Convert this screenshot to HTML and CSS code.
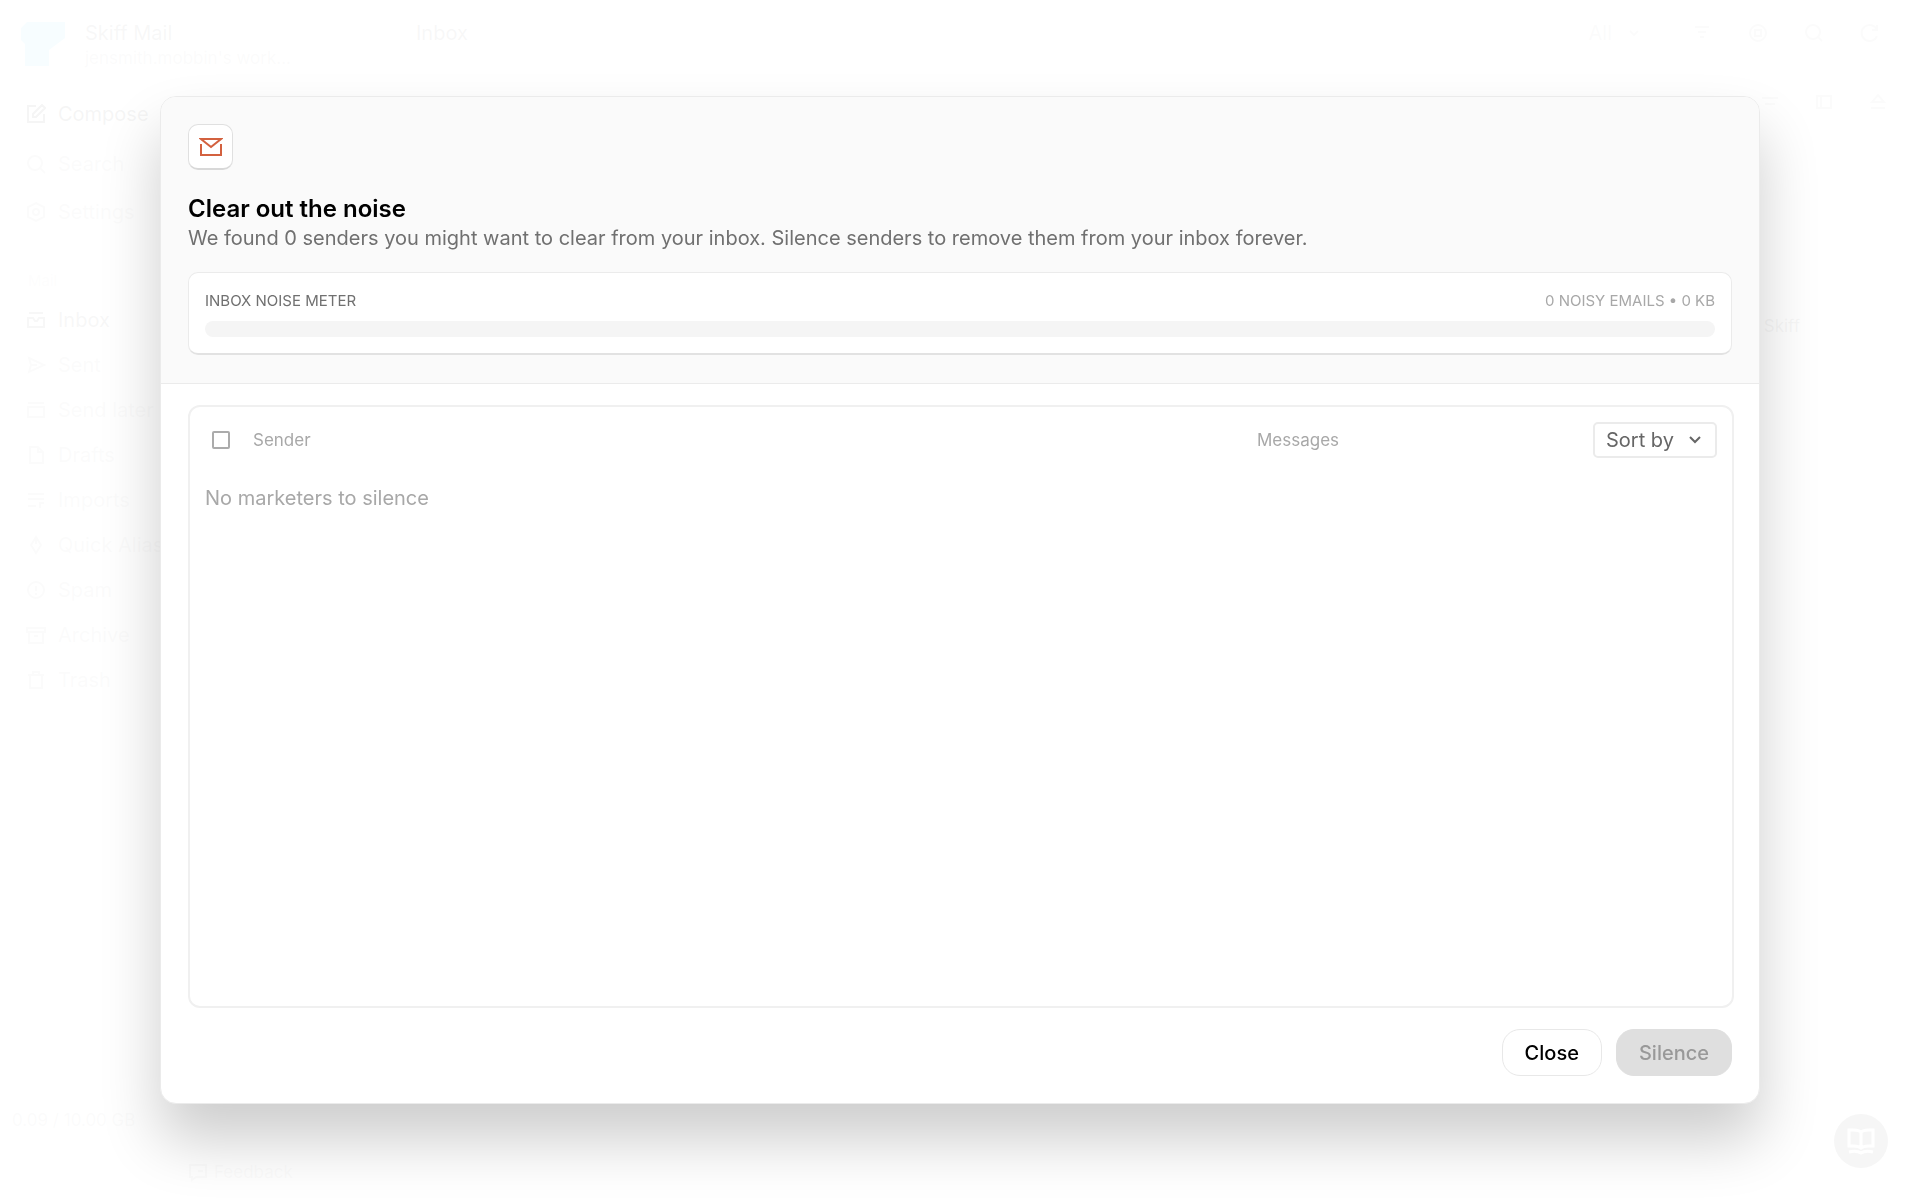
FILE: index.html
```html
<!DOCTYPE html>
<html lang="en">
<head>
    <meta charset="UTF-8">
    <meta name="viewport" content="width=device-width, initial-scale=1.0">
    <title>Skiff Mail</title>
    <link rel="stylesheet" href="styles.css">
</head>
<body>
    <!-- Mailbox -->
    <div class="app">
        <aside class="sidebar">
            <div class="account">
                <svg class="logo" viewBox="0 0 44 46"><path d="M6 2h38v16L28 30v16H4V24L0 20V8z" fill="#38bdf8"/></svg>
                <div>
                    <div class="account-name">Skiff Mail</div>
                    <div class="account-mail">jensmith.mobbin's work...</div>
                </div>
            </div>

            <nav class="actions">
                <a href="#" class="compose"><svg viewBox="0 0 20 20"><path d="M10 2H2v16h16v-8M7 13v-3l9-9 3 3-9 9z"/></svg>Compose</a>
                <a href="#"><svg viewBox="0 0 20 20"><circle cx="9" cy="9" r="7"/><path d="M14 14l5 5"/></svg>Search</a>
                <a href="#"><svg viewBox="0 0 20 20"><path d="M10 1l8 4v10l-8 4-8-4V5z"/><circle cx="10" cy="10" r="3"/></svg>Settings</a>
            </nav>

            <div class="nav-title">Mail</div>
            <nav class="folders">
                <a href="#" class="active"><svg viewBox="0 0 20 20"><path d="M3 3h14M2 8h5l2 3h2l2-3h5v9H2z"/></svg>Inbox</a>
                <a href="#"><svg viewBox="0 0 20 20"><path d="M3 3l15 7-15 7 2-7zM5 10h6"/></svg>Sent</a>
                <a href="#"><svg viewBox="0 0 20 20"><path d="M2 3h16M2 7h16v10H2z"/></svg>Send later</a>
                <a href="#"><svg viewBox="0 0 20 20"><path d="M4 2h8l5 5v11H4zM12 2v5h5"/></svg>Drafts</a>
                <a href="#"><svg viewBox="0 0 20 20"><path d="M2 4h16M2 9h16M2 16h8M14 18v-5h4"/></svg>Imports</a>
                <a href="#"><svg viewBox="0 0 20 20"><path d="M10 2l5 8-5 8-5-8zM10 2v7"/></svg>Quick Alias</a>
                <a href="#"><svg viewBox="0 0 20 20"><circle cx="10" cy="10" r="8"/><path d="M10 6v5M10 13v2"/></svg>Spam</a>
                <a href="#"><svg viewBox="0 0 20 20"><path d="M1 3h18v4H1zM3 7v11h14V7M8 11h4"/></svg>Archive</a>
                <a href="#"><svg viewBox="0 0 20 20"><path d="M2 5h16M7 5V2h6v3M4 5v13h12V5"/></svg>Trash</a>
            </nav>

            <div class="usage">0.09 / 10.00 GB</div>
            <div class="feedback">
                <svg viewBox="0 0 20 20"><path d="M2 3h16v12H8l-4 3v-3H2zM10 9h5"/></svg>Feedback
            </div>
        </aside>

        <main class="mailbox">
            <header class="topbar">
                <span class="mailbox-name">Inbox</span>
                <span class="filter">All <svg viewBox="0 0 20 20"><path d="M6 8l4 4 4-4"/></svg></span>
                <svg viewBox="0 0 20 20"><path d="M3 4h14M6 9h8M8 14h4"/></svg>
                <svg viewBox="0 0 20 20"><circle cx="10" cy="10" r="8"/><path d="M7 7h6v6H7z"/></svg>
                <svg viewBox="0 0 20 20"><circle cx="9" cy="9" r="7"/><path d="M14 14l4 4"/></svg>
                <svg viewBox="0 0 20 20"><path d="M17 7a8 8 0 1 0 0 6M17 2v5h-5"/></svg>
            </header>
            <div class="toolbar">
                <svg viewBox="0 0 20 20"><path d="M2 6h16M5 12h10"/></svg>
                <svg viewBox="0 0 20 20"><path d="M3 4h14v12H3zM7 4v12"/></svg>
                <svg viewBox="0 0 20 20"><path d="M10 3l6 7H4zM3 16h14"/></svg>
            </div>
            <div class="mail-row">Skiff</div>
        </main>
        <button class="help" aria-label="Help">
            <svg viewBox="0 0 28 28"><path d="M14 5C11 2 6 3 2 3v16c4 0 9-1 12 2 3-3 8-2 12-2V3c-4 0-9-1-12 2zM14 5v15M2 25c4-1 9-1 12 1 3-2 8-2 12-1"/></svg>
        </button>
    </div>

    <!-- Silence dialog -->
    <div class="overlay">
        <div class="dialog" role="dialog" aria-labelledby="dialog-title">
            <div class="dialog-header">
                <div class="icon-tile">
                    <svg viewBox="0 0 24 20"><path d="M2 2h20l-10 8zM2 7v11h20V7"/></svg>
                </div>
                <h1 id="dialog-title">Clear out the noise</h1>
                <p>We found 0 senders you might want to clear from your inbox. Silence senders to remove them from your inbox forever.</p>
                <div class="meter">
                    <div class="meter-labels">
                        <span>INBOX NOISE METER</span>
                        <span class="meter-count">0 NOISY EMAILS • 0 KB</span>
                    </div>
                    <div class="meter-bar"></div>
                </div>
            </div>

            <div class="dialog-body">
                <div class="senders">
                    <div class="senders-head">
                        <input type="checkbox" id="select-all">
                        <label for="select-all">Sender</label>
                        <span class="messages">Messages</span>
                        <div class="sort">
                            <select aria-label="Sort by">
                                <option>Sort by</option>
                            </select>
                            <svg viewBox="0 0 12 8"><path d="M1 1l5 5 5-5"/></svg>
                        </div>
                    </div>
                    <p class="empty">No marketers to silence</p>
                </div>
                <div class="buttons">
                    <button class="button">Close</button>
                    <button class="button silence" disabled>Silence</button>
                </div>
            </div>
        </div>
    </div>
</body>
</html>
```

FILE: styles.css
```css
* {
    box-sizing: border-box;
}

body {
    margin: 0;
    font-family: Inter, "Liberation Sans", sans-serif;
    font-size: 20px;
    color: #000;
    background: #fff;
}

svg {
    fill: none;
    stroke: currentColor;
    stroke-width: 2;
}

h1, p {
    margin: 0;
}

/* Mailbox */
.app {
    display: flex;
    height: 100vh;
    overflow: hidden;
}

.sidebar {
    display: flex;
    flex-direction: column;
    width: 392px;
    padding: 20px 12px 12px;
}

.sidebar svg {
    width: 20px;
    height: 20px;
}

.account {
    display: flex;
    gap: 20px;
    height: 68px;
    padding-left: 9px;
}

.sidebar .logo {
    width: 44px;
    height: 46px;
    stroke: none;
}

.account-name {
    line-height: 26px;
    color: #444;
}

.account-mail {
    font-size: 17px;
    line-height: 24px;
    color: #999;
}

.actions a, .folders a {
    display: flex;
    align-items: center;
    gap: 12px;
    height: 45px;
    padding-left: 14px;
    color: #999;
    text-decoration: none;
}

.actions a {
    height: 48px;
}

.actions .compose {
    height: 52px;
    color: #000;
}

.folders .active {
    color: #333;
}

.nav-title {
    padding: 35px 16px 6px;
    font-size: 15px;
    line-height: 20px;
    color: #bbb;
}

.usage {
    margin-top: auto;
    font-size: 17px;
    line-height: 24px;
    color: #999;
}

.feedback {
    display: flex;
    align-items: center;
    gap: 6px;
    padding: 28px 0 4px 176px;
    font-size: 17px;
    line-height: 24px;
    color: #999;
}

.mailbox {
    flex: 1;
}

.topbar {
    display: flex;
    align-items: center;
    gap: 36px;
    padding: 20px 40px 0 24px;
    line-height: 26px;
    color: #999;
}

.topbar svg, .toolbar svg {
    width: 20px;
    height: 20px;
}

.mailbox-name {
    margin-right: auto;
    color: #444;
}

.filter {
    display: flex;
    align-items: center;
    gap: 12px;
    padding-right: 12px;
}

.toolbar {
    display: flex;
    justify-content: flex-end;
    gap: 34px;
    padding: 46px 32px 0 0;
    color: #999;
}

.mail-row {
    padding: 202px 120px 0 0;
    font-size: 17px;
    line-height: 24px;
    text-align: right;
    color: #444;
}

.help {
    position: absolute;
    right: 32px;
    bottom: 32px;
    display: flex;
    align-items: center;
    justify-content: center;
    width: 54px;
    height: 54px;
    padding: 0;
    border: none;
    border-radius: 50%;
    background: #222;
    color: #fff;
}

.help svg {
    width: 28px;
    height: 28px;
    stroke-width: 3;
}

/* Silence dialog */
.overlay {
    position: fixed;
    inset: 0;
    display: flex;
    padding: 96px 160px;
    background: rgba(255, 255, 255, 0.96);
}

.dialog {
    display: flex;
    flex-direction: column;
    flex: 1;
    border: 1px solid #ebebeb;
    border-radius: 16px;
    background: #fff;
    box-shadow: 0 36px 60px rgba(0, 0, 0, 0.2);
    overflow: hidden;
}

.dialog-header {
    padding: 27px 27px 28px;
    border-bottom: 1px solid #ebebeb;
    background: #fafafa;
}

.icon-tile {
    display: flex;
    align-items: center;
    justify-content: center;
    width: 45px;
    height: 46px;
    border: 1px solid #e0e0e0;
    border-bottom: 2px solid #d8d8d8;
    border-radius: 10px;
    background: #fff;
    color: #d3613f;
}

.icon-tile svg {
    width: 24px;
    height: 20px;
}

h1 {
    margin-top: 24px;
    font-size: 24px;
    font-weight: 600;
    line-height: 30px;
}

.dialog-header p {
    line-height: 28px;
    color: #707070;
}

.meter {
    margin-top: 20px;
    padding: 16px;
    border: 1px solid #ebebeb;
    border-bottom: 2px solid #e2e2e2;
    border-radius: 10px;
    background: #fff;
}

.meter-labels {
    display: flex;
    justify-content: space-between;
    font-size: 15px;
    line-height: 24px;
    color: #707070;
}

.meter-count {
    color: #a8a8a8;
}

.meter-bar {
    height: 16px;
    margin-top: 8px;
    border-radius: 8px;
    background: #f5f5f5;
}

.dialog-body {
    display: flex;
    flex-direction: column;
    flex: 1;
    padding: 21px 25px 27px 27px;
}

.senders {
    flex: 1;
    border: 2px solid #f0f0f0;
    border-radius: 12px;
    padding: 15px;
}

.senders-head {
    display: flex;
    align-items: center;
    font-size: 17px;
    color: #a8a8a8;
}

.senders-head input {
    appearance: none;
    width: 18px;
    height: 18px;
    margin: 0 23px 0 7px;
    border: 2px solid #ababab;
    border-radius: 2px;
}

.senders-head label {
    flex: 1;
}

.messages {
    width: 336px;
}

.sort {
    position: relative;
}

.sort select {
    appearance: none;
    width: 124px;
    height: 36px;
    padding: 0 11px;
    border: 2px solid #ebebeb;
    border-radius: 5px;
    background: #fff;
    color: #666;
    font-family: inherit;
    font-size: 20px;
}

.sort svg {
    position: absolute;
    top: 14px;
    right: 16px;
    width: 12px;
    height: 8px;
    color: #666;
    pointer-events: none;
}

.empty {
    margin-top: 26px;
    line-height: 28px;
    color: #a8a8a8;
}

.buttons {
    display: flex;
    justify-content: flex-end;
    gap: 14px;
    padding: 21px 2px 0 0;
}

.button {
    height: 47px;
    padding: 0 22px;
    border: 1px solid #e8e8e8;
    border-radius: 18px;
    background: #fff;
    color: #000;
    font-family: inherit;
    font-size: 20px;
    font-weight: 500;
}

.silence {
    border-color: #dfdfdf;
    background: #dfdfdf;
    color: #999;
}
```
